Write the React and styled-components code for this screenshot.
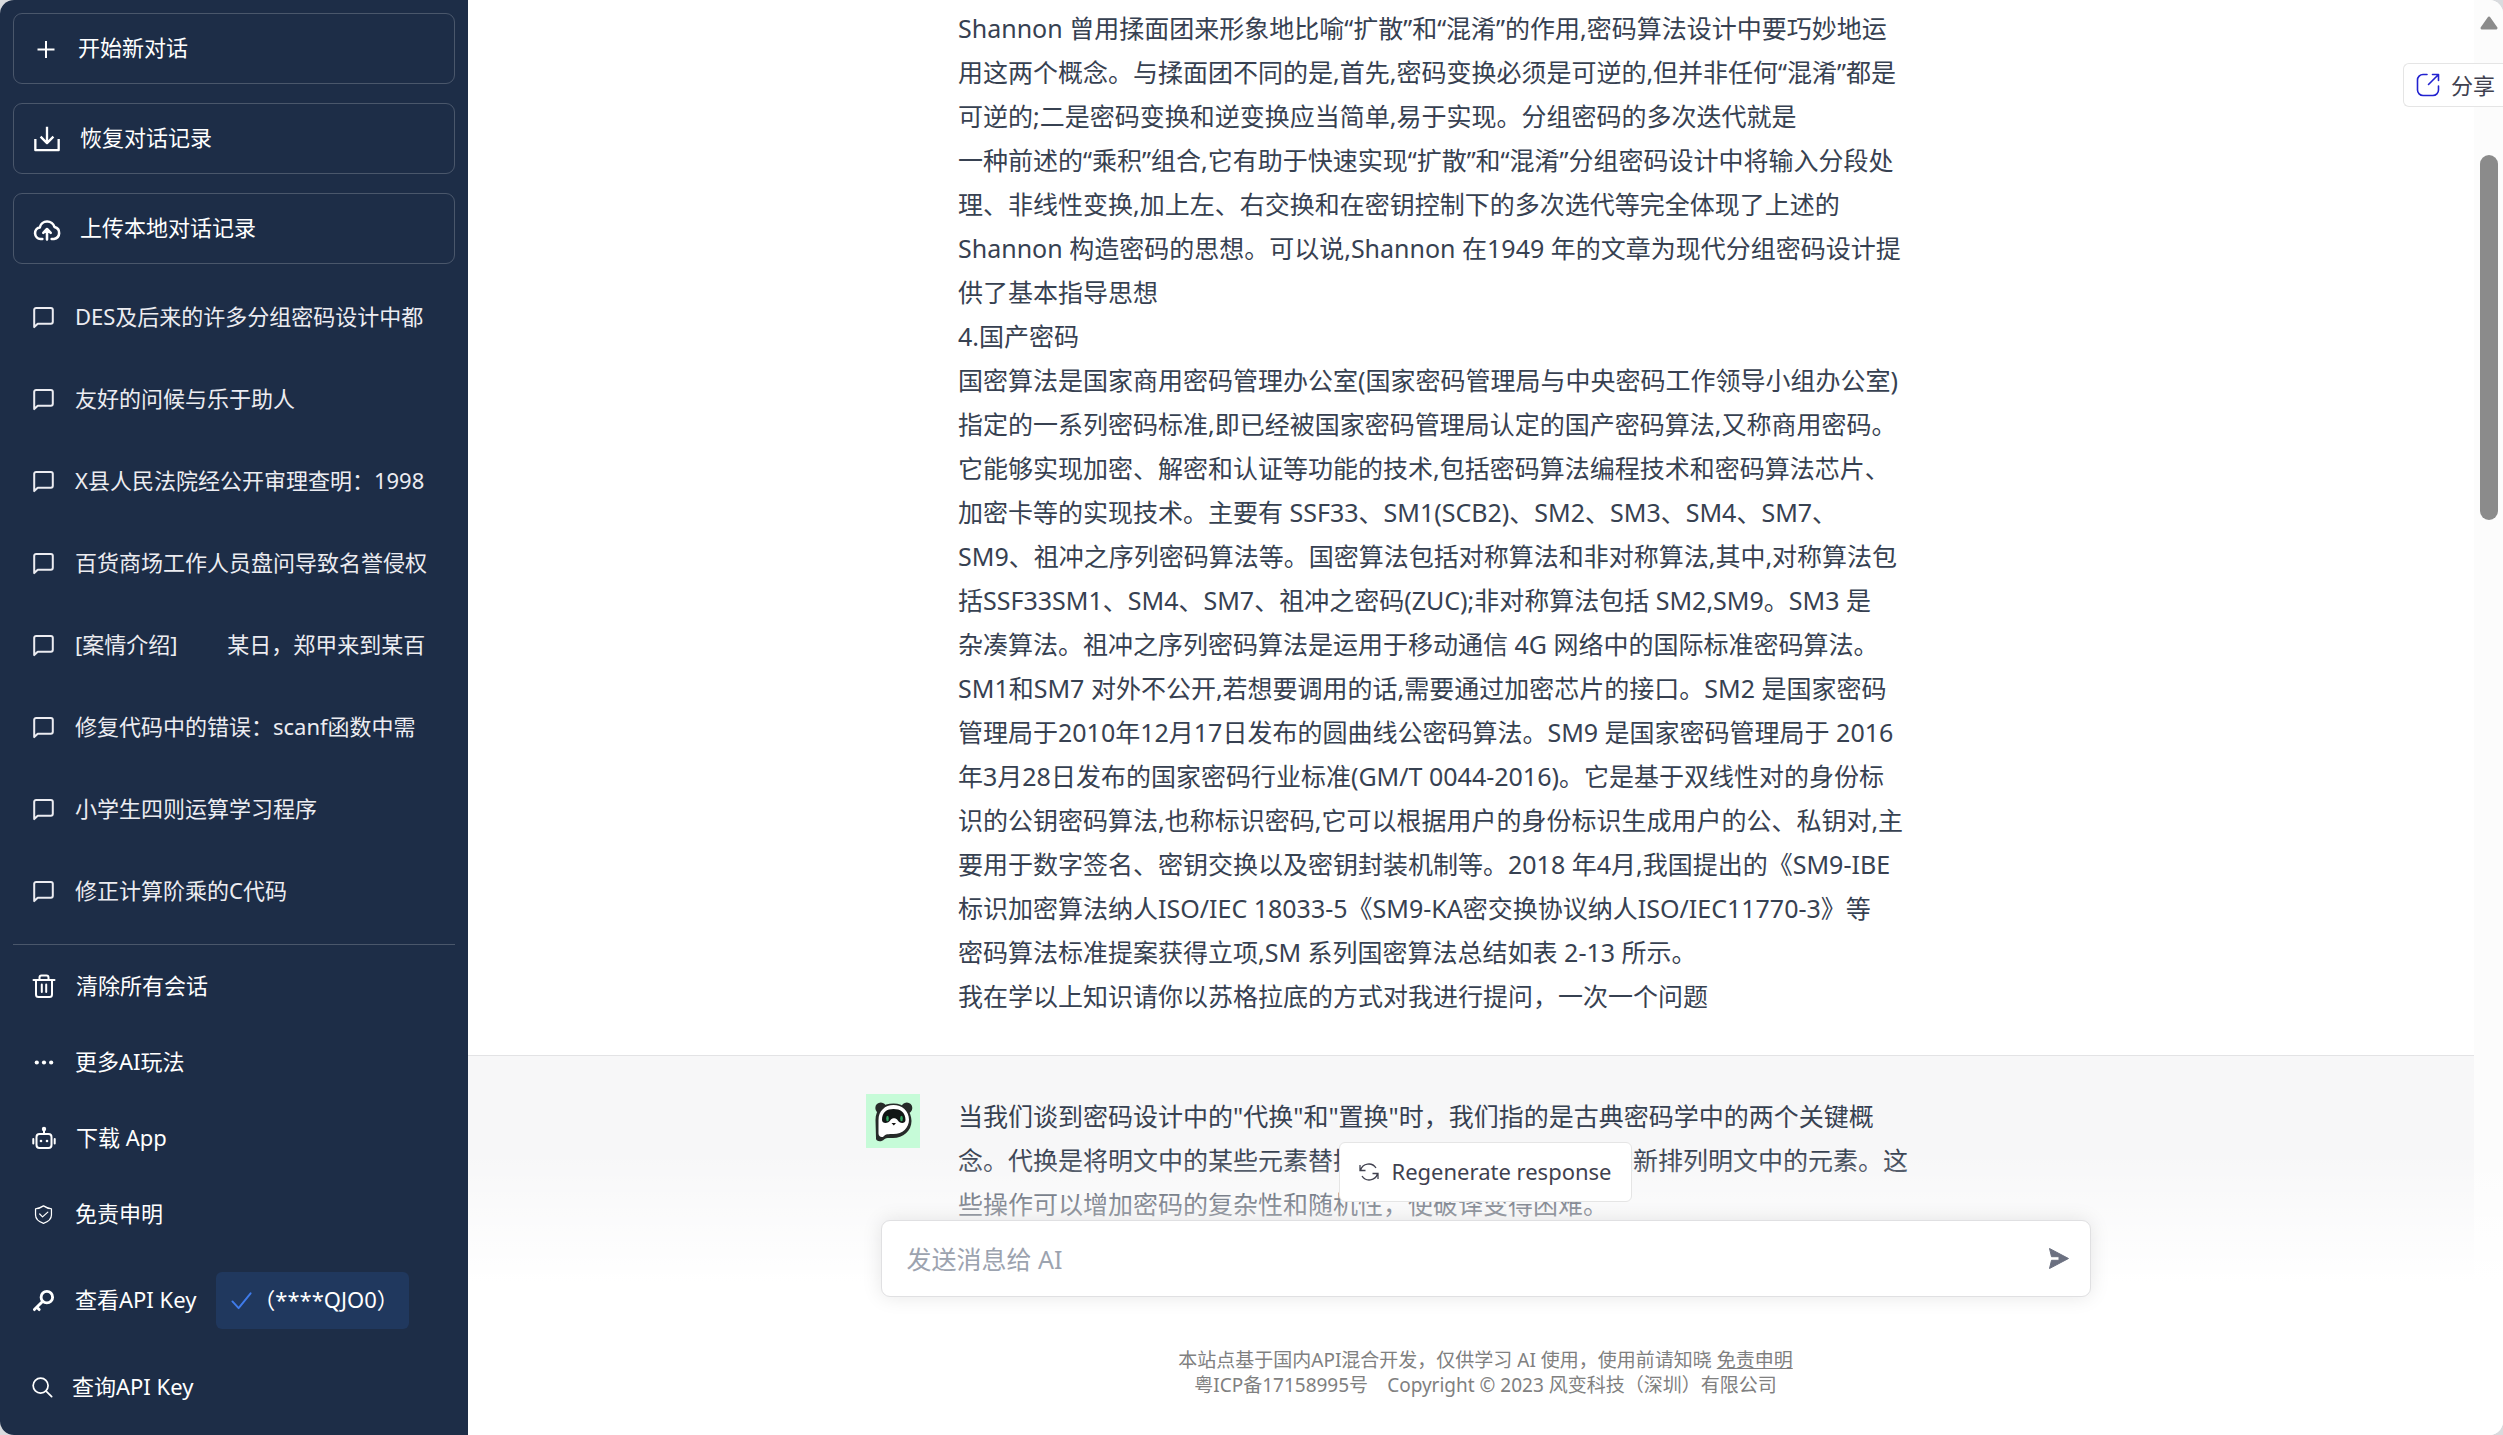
import React from "react";
import styled, { createGlobalStyle } from "styled-components";

const Global = createGlobalStyle`
  *, *::before, *::after { box-sizing: border-box; }
  html, body, #root { height: 100%; margin: 0; }
  body { background: #d9dbde; overflow: hidden; }
  body, button, input { font-family: "Noto Sans", "Noto Sans CJK SC", sans-serif; }
  button { margin: 0; cursor: pointer; }
  svg { display: block; flex: none; }
`;

const Page = styled.div`
  display: flex;
  height: 100vh;
  border-radius: 14px;
  overflow: hidden;
  background: #fff;
  color: #374151;
`;

const Sidebar = styled.aside`
  display: flex;
  flex-direction: column;
  flex: none;
  width: 468px;
  padding: 13px 13px 10px;
  background: #1d2d47;
  color: #fff;
  font-size: 22px;
  line-height: 32px;
`;

const Label = styled.span`
  padding-bottom: 3px;
`;

const Actions = styled.div`
  display: flex;
  flex-direction: column;
  gap: 19px;
`;

const ActionButton = styled.button`
  display: flex;
  align-items: center;
  gap: ${(p) => (p.$wide ? 19 : 21)}px;
  height: 71px;
  padding: 0 19px;
  border: 1px solid rgba(255, 255, 255, 0.2);
  border-radius: 9px;
  background: transparent;
  color: inherit;
  font-size: 22px;
  line-height: 32px;
`;

const History = styled.nav`
  display: flex;
  flex-direction: column;
  flex: 1;
  min-height: 0;
  margin-top: 12px;
  overflow: hidden;
`;

const HistoryItem = styled.a`
  display: flex;
  align-items: center;
  gap: 20px;
  flex: none;
  height: 82px;
  padding: 0 19px;
  color: #ececf1;
  text-decoration: none;
  white-space: pre;
`;

const Menu = styled.nav`
  display: flex;
  flex-direction: column;
  padding-top: 3px;
  border-top: 1px solid rgba(255, 255, 255, 0.2);
`;

const MenuItem = styled.button`
  display: flex;
  align-items: center;
  gap: ${(p) => (p.$tight ? 17 : 20)}px;
  min-height: 76px;
  padding: ${(p) => (p.$tall ? 20 : 0)}px 19px;
  border: 0;
  background: transparent;
  color: inherit;
  font-size: 22px;
  line-height: 32px;
  text-align: left;
`;

const KeyBadge = styled.span`
  display: flex;
  align-items: center;
  height: 57px;
  padding: 0 10px 0 14px;
  border-radius: 6px;
  background: #20385e;
`;

const Main = styled.main`
  position: relative;
  display: flex;
  flex: 1;
  min-width: 0;
`;

const Thread = styled.div`
  flex: 1;
  min-width: 0;
  height: 100%;
  overflow: hidden;
`;

const Message = styled.section`
  padding: ${(p) => (p.$reply ? "38px 0 240px" : "6px 0 37px")};
  border-bottom: 1px solid #e3e3e5;
  background: ${(p) => (p.$reply ? "#f7f7f8" : "#fff")};
`;

const MessageRow = styled.div`
  display: flex;
  gap: 38px;
  max-width: 1210px;
  margin: 0 auto;
`;

const AvatarSlot = styled.div`
  flex: none;
  width: 54px;
`;

const MessageText = styled.p`
  margin: 0;
  font-size: 25px;
  line-height: 44px;
  white-space: pre;
`;

const ScrollTrack = styled.div`
  display: flex;
  flex-direction: column;
  align-items: center;
  flex: none;
  width: 29px;
  padding-top: 16px;
  background: #fcfcfc;
`;

const ScrollThumb = styled.div`
  width: 18px;
  height: 365px;
  margin-top: 125px;
  border-radius: 9px;
  background: #8b8b8b;
`;

const ShareButton = styled.button`
  position: absolute;
  top: 63px;
  right: 0;
  display: flex;
  align-items: center;
  gap: 11px;
  height: 44px;
  padding: 0 8px 0 12px;
  border: 1px solid #e5e5e5;
  border-right: 0;
  border-radius: 6px 0 0 6px;
  background: #fff;
  color: #40414f;
  font-size: 22px;
`;

const Composer = styled.div`
  position: absolute;
  left: 0;
  right: 0;
  bottom: 0;
  display: flex;
  flex-direction: column;
  align-items: center;
  background: linear-gradient(180deg, rgba(255, 255, 255, 0) 3%, #fff 48%);
`;

const RegenerateButton = styled.button`
  display: flex;
  align-items: center;
  gap: 12px;
  height: 60px;
  padding: 0 19px;
  border: 1px solid #e5e5e5;
  border-radius: 6px;
  background: #fff;
  color: #40414f;
  font-size: 22px;
  line-height: 32px;
`;

const InputBox = styled.form`
  display: flex;
  align-items: center;
  width: 100%;
  max-width: 1210px;
  height: 77px;
  margin: 18px 0 51px;
  padding: 0 21px 0 25px;
  border: 1px solid #e0e0e2;
  border-radius: 9px;
  background: #fff;
  box-shadow: 0 0 20px rgba(0, 0, 0, 0.1);
`;

const Prompt = styled.input`
  flex: 1;
  min-width: 0;
  padding: 0;
  border: 0;
  outline: 0;
  background: transparent;
  font-size: 25px;
  &::placeholder { color: #9ca3af; opacity: 1; }
`;

const SendButton = styled.button`
  padding: 0;
  border: 0;
  background: transparent;
  color: #6b7080;
`;

const Footer = styled.footer`
  padding-bottom: 37px;
  color: #808080;
  font-size: 19px;
  line-height: 25px;
  text-align: center;
  white-space: pre;
`;

const FooterLink = styled.a`
  color: inherit;
  text-decoration: underline;
`;

const Stroke = ({ size = 23, width = 2, children, ...rest }) => (
  <svg width={size} height={size} viewBox="0 0 24 24" fill="none" stroke="currentColor"
    strokeWidth={width} strokeLinecap="round" strokeLinejoin="round" aria-hidden="true" {...rest}>
    {children}
  </svg>
);

const PlusIcon = () => <Stroke strokeLinecap="butt" size={24} width={2}><path d="M13 4v17M4.500 12.500h17" /></Stroke>;
const DownloadIcon = () => (
  <Stroke size={28} width={2} strokeLinecap="butt" strokeLinejoin="round">
    <path d="M2 12v9.500h20V12M12 1.500v14M6.500 10l5.500 5.500 5.500-5.500" />
  </Stroke>
);
const CloudIcon = () => (
  <Stroke size={28} width={2.200}>
    <path d="M8 20.500H6.500a5 5 0 0 1-.7-9.900 6.500 6.500 0 0 1 12.600-.3 5.200 5.200 0 0 1-.4 10.200H16M12 21v-8.500M8.800 15.300 12 12l3.200 3.300" />
  </Stroke>
);
const ChatIcon = () => (
  <Stroke size={23} width={2.100}><path d="M2.300 22V4a2 2 0 0 1 2-2h15.400a2 2 0 0 1 2 2v12.500a2 2 0 0 1-2 2H6z" /></Stroke>
);
const TrashIcon = () => (
  <Stroke width={2} size={24}>
    <path d="M1.500 6h21M4 6v14.500A2.500 2.500 0 0 0 6.500 23h11a2.500 2.500 0 0 0 2.500-2.500V6M7.500 6V3.500a2 2 0 0 1 2-2h5a2 2 0 0 1 2 2V6M9.800 10.500v7.500M14.200 10.500v7.500" />
  </Stroke>
);
const DotsIcon = () => (
  <Stroke><g fill="currentColor" stroke="none"><circle cx="5" cy="12" r="2.200" /><circle cx="12.500" cy="12" r="2.200" /><circle cx="20" cy="12" r="2.200" /></g></Stroke>
);
const BotIcon = () => (
  <Stroke size={24}>
    <rect x="4.500" y="8" width="15" height="14" rx="3" /><path d="M12 3v5M1.300 13v4.500M22.700 13v4.500" />
    <g fill="currentColor" stroke="none"><circle cx="12" cy="3" r="2.200" /><circle cx="9" cy="15" r="1.300" /><circle cx="15" cy="15" r="1.300" /></g>
  </Stroke>
);
const ShieldIcon = () => (
  <Stroke width={1.300}>
    <path d="M12 3c2.500 1.800 5 2.700 8.300 3v6.500c0 4.300-3.300 7-8.300 8.800-5-1.800-8.300-4.500-8.300-8.800V6C7 5.700 9.500 4.800 12 3zM8 11.500l3 3 5.500-5" />
  </Stroke>
);
const KeyIcon = () => (
  <Stroke width={3}><circle cx="15.500" cy="8.500" r="6" /><path d="M11 13 2.500 21.500M5 19l2.500 2.500" /></Stroke>
);
const SearchIcon = () => <Stroke width={1.800}><circle cx="9" cy="10" r="7.800" /><path d="m14.700 15.700 5.800 5.800" /></Stroke>;
const CheckIcon = () => <Stroke width={2} stroke="#3f7bea"><path d="m2.500 13 6.500 7L21.500 4.500" /></Stroke>;
const ShareIcon = () => (
  <Stroke size={24} width={1.600} stroke="#2222d0">
    <path d="M11 1.500H7a5.500 5.500 0 0 0-5.500 5.500v10A5.500 5.500 0 0 0 7 22.500h10a5.500 5.500 0 0 0 5.500-5.500v-4M16.500 1.500h6v6M22 2 12.500 11.500" />
  </Stroke>
);
const RefreshIcon = () => (
  <svg width="20" height="18" viewBox="0 0 20 18" fill="none" stroke="currentColor" strokeWidth="1.300" aria-hidden="true">
    <path d="M1.500 7.200A8.600 8.600 0 0 1 17 5M18.500 10.800A8.600 8.600 0 0 1 3 13M1 2v5.500h5.500M19 16v-5.500h-5.500" />
  </svg>
);
const SendIcon = () => (
  <svg width="20" height="21" viewBox="0 0 20 21" fill="currentColor" stroke="currentColor"
    strokeWidth="1" strokeLinejoin="round" aria-hidden="true">
    <path d="M.5.500 19.500 10.500.500 20.500 2.500 12.300H10V8.700H2.500z" />
  </svg>
);
const ArrowUp = () => (
  <svg width="18" height="14" viewBox="0 0 18 14" aria-hidden="true">
    <path d="M9 2 16 12H2z" fill="#8b8b8b" stroke="#8b8b8b" strokeWidth="3" strokeLinejoin="round" />
  </svg>
);
const PandaAvatar = () => (
  <svg width="54" height="54" viewBox="0 0 54 54" role="img" aria-label="AI">
    <rect width="54" height="54" fill="#c6fbd8" />
    <g fill="#262a29">
      <circle cx="14.800" cy="14" r="5.500" /><circle cx="40.800" cy="14" r="5.500" />
      <path d="M9.500 26C9.500 15 17 9.500 27.500 9.500S45.500 17 45.500 27 37 44 27 44c-4 0-7-.5-9 1.500-2 2.500-8 2.500-8-1z" />
    </g>
    <path d="M12.500 26c0-9 6.500-15 15-15s15.500 6 15.500 14.500S36.500 40 27.500 40c-5 0-8 0-10 2.500-2 1.500-5 0-5-3z" fill="#fff" />
    <path d="M16 26c0-8 5-11 11.500-11S39.500 18 39.500 26c0 4-6 4-8 0-1.500-2.500-5.500-2.500-7 0-2 4-8.500 4-8.500 0z" fill="#111615" />
    <ellipse cx="21.500" cy="24.500" rx="1.300" ry="2.800" fill="#35a864" /><ellipse cx="35.500" cy="24.500" rx="1.300" ry="2.800" fill="#35a864" />
    <path d="M25.500 29h4.500l-2.200 2.500z" fill="#111" />
  </svg>
);

const history = [
  "DES及后来的许多分组密码设计中都",
  "友好的问候与乐于助人",
  "X县人民法院经公开审理查明：1998",
  "百货商场工作人员盘问导致名誉侵权",
  "[案情介绍] \u3000\u3000某日，郑甲来到某百",
  "修复代码中的错误：scanf函数中需",
  "小学生四则运算学习程序",
  "修正计算阶乘的C代码",
];

const question = `Shannon 曾用揉面团来形象地比喻“扩散”和“混淆”的作用,密码算法设计中要巧妙地运
用这两个概念。与揉面团不同的是,首先,密码变换必须是可逆的,但并非任何“混淆”都是
可逆的;二是密码变换和逆变换应当简单,易于实现。分组密码的多次迭代就是
一种前述的“乘积”组合,它有助于快速实现“扩散”和“混淆”分组密码设计中将输入分段处
理、非线性变换,加上左、右交换和在密钥控制下的多次选代等完全体现了上述的
Shannon 构造密码的思想。可以说,Shannon 在1949 年的文章为现代分组密码设计提
供了基本指导思想
4.国产密码
国密算法是国家商用密码管理办公室(国家密码管理局与中央密码工作领导小组办公室)
指定的一系列密码标准,即已经被国家密码管理局认定的国产密码算法,又称商用密码。
它能够实现加密、解密和认证等功能的技术,包括密码算法编程技术和密码算法芯片、
加密卡等的实现技术。主要有 SSF33、SM1(SCB2)、SM2、SM3、SM4、SM7、
SM9、祖冲之序列密码算法等。国密算法包括对称算法和非对称算法,其中,对称算法包
括SSF33SM1、SM4、SM7、祖冲之密码(ZUC);非对称算法包括 SM2,SM9。SM3 是
杂凑算法。祖冲之序列密码算法是运用于移动通信 4G 网络中的国际标准密码算法。
SM1和SM7 对外不公开,若想要调用的话,需要通过加密芯片的接口。SM2 是国家密码
管理局于2010年12月17日发布的圆曲线公密码算法。SM9 是国家密码管理局于 2016
年3月28日发布的国家密码行业标准(GM/T 0044-2016)。它是基于双线性对的身份标
识的公钥密码算法,也称标识密码,它可以根据用户的身份标识生成用户的公、私钥对,主
要用于数字签名、密钥交换以及密钥封装机制等。2018 年4月,我国提出的《SM9-IBE
标识加密算法纳人ISO/IEC 18033-5《SM9-KA密交换协议纳人ISO/IEC11770-3》等
密码算法标准提案获得立项,SM 系列国密算法总结如表 2-13 所示。
我在学以上知识请你以苏格拉底的方式对我进行提问，一次一个问题`;

const answer = `当我们谈到密码设计中的"代换"和"置换"时，我们指的是古典密码学中的两个关键概
念。代换是将明文中的某些元素替换为其他元素，置换则是重新排列明文中的元素。这
些操作可以增加密码的复杂性和随机性，使破译变得困难。`;

export default function App() {
  return (
    <>
      <Global />
      <Page>
        <Sidebar>
          <Actions>
            <ActionButton type="button"><PlusIcon /><Label>开始新对话</Label></ActionButton>
            <ActionButton type="button" $wide><DownloadIcon /><Label>恢复对话记录</Label></ActionButton>
            <ActionButton type="button" $wide><CloudIcon /><Label>上传本地对话记录</Label></ActionButton>
          </Actions>
          <History aria-label="对话">
            {history.map((title) => (
              <HistoryItem key={title} href="#"><ChatIcon /><Label>{title}</Label></HistoryItem>
            ))}
          </History>
          <Menu>
            <MenuItem type="button"><TrashIcon /><Label>清除所有会话</Label></MenuItem>
            <MenuItem type="button"><DotsIcon /><Label>更多AI玩法</Label></MenuItem>
            <MenuItem type="button"><BotIcon /><Label>下载 App</Label></MenuItem>
            <MenuItem type="button"><ShieldIcon /><Label>免责申明</Label></MenuItem>
            <MenuItem type="button" $tall>
              <KeyIcon /><Label>查看API Key</Label>
              <KeyBadge><CheckIcon /><Label>（****QJO0）</Label></KeyBadge>
            </MenuItem>
            <MenuItem type="button" $tight><SearchIcon /><Label>查询API Key</Label></MenuItem>
          </Menu>
        </Sidebar>
        <Main>
          <Thread>
            <Message>
              <MessageRow>
                <AvatarSlot />
                <MessageText>{question}</MessageText>
              </MessageRow>
            </Message>
            <Message $reply>
              <MessageRow>
                <AvatarSlot><PandaAvatar /></AvatarSlot>
                <MessageText>{answer}</MessageText>
              </MessageRow>
            </Message>
          </Thread>
          <ScrollTrack><ArrowUp /><ScrollThumb /></ScrollTrack>
          <Composer>
            <RegenerateButton type="button"><RefreshIcon /><Label>Regenerate response</Label></RegenerateButton>
            <InputBox onSubmit={(e) => e.preventDefault()}>
              <Prompt type="text" placeholder="发送消息给 AI" aria-label="发送消息给 AI" />
              <SendButton type="submit" aria-label="Send"><SendIcon /></SendButton>
            </InputBox>
            <Footer>
              <div>本站点基于国内API混合开发，仅供学习 AI 使用，使用前请知晓 <FooterLink href="#">免责申明</FooterLink></div>
              <div>粤ICP备17158995号{"\u2003"}Copyright © 2023 风变科技（深圳）有限公司</div>
            </Footer>
          </Composer>
          <ShareButton type="button"><ShareIcon /><Label>分享</Label></ShareButton>
        </Main>
      </Page>
    </>
  );
}
